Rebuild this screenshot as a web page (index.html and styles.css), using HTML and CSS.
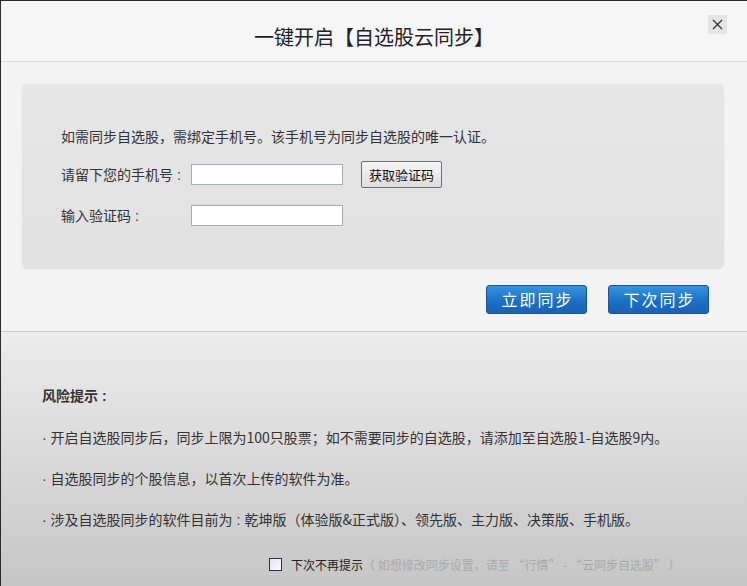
FILE: index.html
```html
<!DOCTYPE html>
<html lang="zh-CN">
<head>
<meta charset="utf-8">
<title>一键开启【自选股云同步】</title>
<link rel="stylesheet" href="styles.css">
</head>
<body>
<div class="dialog">
  <div class="header">
    <h1 class="title">一键开启【自选股云同步】</h1>
    <button class="close" type="button" aria-label="关闭">
      <svg width="11" height="11" viewBox="0 0 11 11"><path d="M1 1 L10 10 M10 1 L1 10" stroke="#333" stroke-width="1.3" fill="none"/></svg>
    </button>
  </div>
  <div class="upper">
    <div class="panel">
      <p class="intro">如需同步自选股，需绑定手机号。该手机号为同步自选股的唯一认证。</p>
      <div class="row">
        <label class="label">请留下您的手机号<span class="colon">:</span></label>
        <input class="field" type="text">
        <button class="code-btn" type="button">获取验证码</button>
      </div>
      <div class="row row-2">
        <label class="label">输入验证码<span class="colon">:</span></label>
        <input class="field" type="text">
      </div>
    </div>
    <div class="actions">
      <button class="blue-btn" type="button">立即同步</button>
      <button class="blue-btn" type="button">下次同步</button>
    </div>
  </div>
  <div class="lower">
    <p class="risk-title">风险提示<span class="colon">:</span></p>
    <p class="risk-line"><span class="dot">· </span>开启自选股同步后，同步上限为100只股票；如不需要同步的自选股，请添加至自选股1-自选股9内。</p>
    <p class="risk-line"><span class="dot">· </span>自选股同步的个股信息，以首次上传的软件为准。</p>
    <p class="risk-line"><span class="dot">· </span>涉及自选股同步的软件目前为<span class="colon">:</span>乾坤版（体验版&amp;正式版）、领先版、主力版、决策版、手机版。</p>
    <div class="remind">
      <span class="checkbox"></span>
      <span class="remind-text">下次不再提示</span><span class="hint">（ 如想修改同步设置，请至 “行情” - “云同步自选股” ）</span>
    </div>
  </div>
</div>
</body>
</html>
```
FILE: styles.css
```css
html, body {
  margin: 0;
  padding: 0;
}
body {
  font-family: "Noto Sans CJK SC", "Noto Sans", sans-serif;
  color: #333;
  background: #c8c8c8;
}
.dialog {
  position: relative;
  width: 746px;
  height: 585px;
  border-top: 1px solid #2b2b2b;
  border-left: 1px solid #2b2b2b;
  display: flex;
  flex-direction: column;
  overflow: hidden;
}
.header {
  height: 61px;
  border-bottom: 1px solid #dcdcdc;
  background: #f6f6f6;
  box-sizing: border-box;
  padding-top: 11px;
}
.title {
  margin: 0;
  font-size: 20px;
  font-weight: normal;
  line-height: 50px;
  height: 50px;
  text-align: center;
  color: #222;
}
.close {
  position: absolute;
  top: 14px;
  right: 20px;
  width: 19px;
  height: 19px;
  padding: 0;
  border: none;
  background: #e4e4e4;
  display: flex;
  align-items: center;
  justify-content: center;
}
.upper {
  background: #f3f3f3;
  border-bottom: 1px solid #cacaca;
  padding: 22px 0 17px 21px;
}
.panel {
  width: 702px;
  height: 185px;
  box-sizing: border-box;
  border-radius: 6px;
  background: linear-gradient(#e6e6e6, #e1e1e1);
  box-shadow: 0 0 1px rgba(0,0,0,0.18);
  padding: 42px 0 0 39px;
}
.intro {
  margin: 0;
  font-size: 14px;
  line-height: 20px;
  height: 20px;
}
.row {
  display: flex;
  align-items: center;
  height: 28px;
  margin-top: 14px;
}
.row-2 {
  margin-top: 13px;
}
.label {
  width: 130px;
  font-size: 14px;
  line-height: 20px;
}
.colon {
  font-family: "Liberation Sans", sans-serif;
  padding: 0 4px;
}
.field {
  width: 152px;
  height: 21px;
  box-sizing: border-box;
  border: 1px solid #a3adb8;
  background: #fff;
  margin: 0;
  padding: 0 3px;
}
.code-btn {
  margin-left: 18px;
  width: 81px;
  height: 27px;
  box-sizing: border-box;
  border: 1px solid #6f6f6f;
  border-radius: 2px;
  background: linear-gradient(#f7f7f7, #dcdcdc);
  font-family: "Noto Sans CJK SC", sans-serif;
  font-size: 13px;
  color: #111;
  padding: 0;
  line-height: 25px;
}
.actions {
  display: flex;
  justify-content: flex-end;
  gap: 21px;
  margin-top: 16px;
  padding-right: 38px;
}
.blue-btn {
  width: 101px;
  height: 29px;
  box-sizing: border-box;
  border: 1px solid #1a5499;
  border-radius: 3px;
  background: linear-gradient(#3394e0, #1d70c4 55%, #1663b5);
  color: #fff;
  font-family: "Noto Sans CJK SC", sans-serif;
  font-size: 16px;
  letter-spacing: 2px;
  padding: 0 0 0 2px;
  line-height: 27px;
}
.lower {
  flex: 1;
  background: linear-gradient(#ececec, #c6c6c6);
  padding: 53px 0 0 41px;
}
.risk-title {
  margin: 0;
  font-size: 14px;
  font-weight: bold;
  line-height: 20px;
}
.risk-line {
  margin: 21px 0 0;
  font-size: 14px;
  line-height: 20px;
}
.risk-line + .risk-line {
  margin-top: 20px;
}
.dot {
  font-family: "Liberation Sans", sans-serif;
}
.remind {
  display: flex;
  align-items: center;
  height: 20px;
  margin: 24px 0 0 227px;
  font-size: 12px;
}
.checkbox {
  width: 13px;
  height: 13px;
  box-sizing: border-box;
  border: 1px solid #1f3550;
  background: linear-gradient(135deg, #dfe3e8, #fcfcfc);
  margin-right: 9px;
}
.remind-text {
  color: #222;
}
.hint {
  color: #a8a8a8;
  white-space: pre;
}
```
